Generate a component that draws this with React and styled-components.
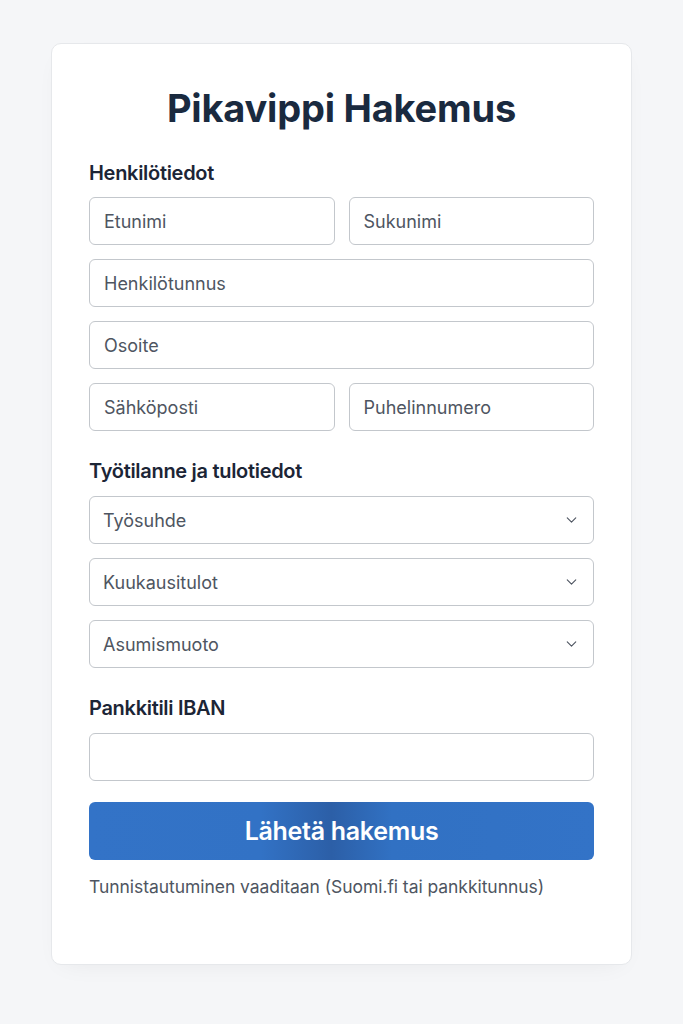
import React from 'react';
import styled, { createGlobalStyle } from 'styled-components';
import { ChevronDown } from 'lucide-react';

const GlobalStyle = createGlobalStyle`
  html, body {
    margin: 0;
    padding: 0;
    background: #f5f6f8;
    font-family: Inter, "Noto Sans", sans-serif;
  }
  * { box-sizing: border-box; }
`;

const Page = styled.div`
  min-height: 1024px;
  padding: 43px 51px 0 51px;
`;

const Card = styled.form`
  background: #ffffff;
  border: 1px solid #e6e8eb;
  border-radius: 10px;
  box-shadow: 0 8px 24px -12px rgba(0, 0, 0, 0.08);
  padding: 42px 37px 67px 37px;
  display: flex;
  flex-direction: column;
`;

const Title = styled.h1`
  margin: 0 0 32px 0;
  text-align: center;
  font-size: 38px;
  line-height: 44px;
  font-weight: 700;
  color: #1a2a3f;
  letter-spacing: -0.2px;
`;

const SectionTitle = styled.h2`
  margin: ${({ $first }) => ($first ? '0 0 13px 0' : '29px 0 14px 0')};
  font-size: 20px;
  line-height: 22px;
  font-weight: 600;
  color: #1c2536;
  letter-spacing: -0.3px;
`;

const Stack = styled.div`
  display: flex;
  flex-direction: column;
  gap: 14px;
`;

const Row = styled.div`
  display: grid;
  grid-template-columns: ${({ $cols }) => `repeat(${$cols || 1}, 1fr)`};
  gap: 14px;
`;

const Input = styled.input`
  width: 100%;
  height: 48px;
  padding: 0 14px;
  border: 1px solid #c3c7cc;
  border-radius: 6px;
  font-family: inherit;
  font-size: 18px;
  color: #1f2937;
  background: #fff;
  outline: none;
  &::placeholder {
    color: #4e5561;
  }
`;

const SelectWrap = styled.div`
  position: relative;
`;

const Select = styled.select`
  width: 100%;
  height: 48px;
  padding: 0 40px 0 13px;
  border: 1px solid #c3c7cc;
  border-radius: 6px;
  font-family: inherit;
  font-size: 18px;
  color: #4e5561;
  background: #fff;
  appearance: none;
  outline: none;
`;

const Chevron = styled(ChevronDown)`
  position: absolute;
  right: 14px;
  top: 50%;
  transform: translateY(-50%);
  color: #4e5561;
  pointer-events: none;
`;

const Button = styled.button`
  margin-top: 21px;
  height: 58px;
  border: none;
  border-radius: 6px;
  background: linear-gradient(
    90deg,
    #3373c7 0%,
    #3272c5 34%,
    #2c5fa7 48%,
    #3171c3 60%,
    #3373c7 100%
  );
  color: #ffffff;
  font-family: inherit;
  font-size: 25px;
  font-weight: 600;
  letter-spacing: -0.3px;
  cursor: pointer;
`;

const Note = styled.p`
  margin: 17px 0 0 0;
  font-size: 17.5px;
  line-height: 20px;
  color: #4e5561;
  letter-spacing: -0.05px;
`;

const SelectField = ({ label }) => (
  <SelectWrap>
    <Select defaultValue="">
      <option value="" disabled>
        {label}
      </option>
    </Select>
    <Chevron size={17} strokeWidth={1.6} />
  </SelectWrap>
);

const App = () => (
  <Page>
    <GlobalStyle />
    <Card onSubmit={(e) => e.preventDefault()}>
      <Title>Pikavippi Hakemus</Title>

      <SectionTitle $first>Henkilötiedot</SectionTitle>
      <Stack>
        <Row $cols={2}>
          <Input placeholder="Etunimi" />
          <Input placeholder="Sukunimi" />
        </Row>
        <Input placeholder="Henkilötunnus" />
        <Input placeholder="Osoite" />
        <Row $cols={2}>
          <Input placeholder="Sähköposti" />
          <Input placeholder="Puhelinnumero" />
        </Row>
      </Stack>

      <SectionTitle>Työtilanne ja tulotiedot</SectionTitle>
      <Stack>
        <SelectField label="Työsuhde" />
        <SelectField label="Kuukausitulot" />
        <SelectField label="Asumismuoto" />
      </Stack>

      <SectionTitle>Pankkitili IBAN</SectionTitle>
      <Input />

      <Button type="submit">Lähetä hakemus</Button>
      <Note>Tunnistautuminen vaaditaan (Suomi.fi tai pankkitunnus)</Note>
    </Card>
  </Page>
);

export default App;
